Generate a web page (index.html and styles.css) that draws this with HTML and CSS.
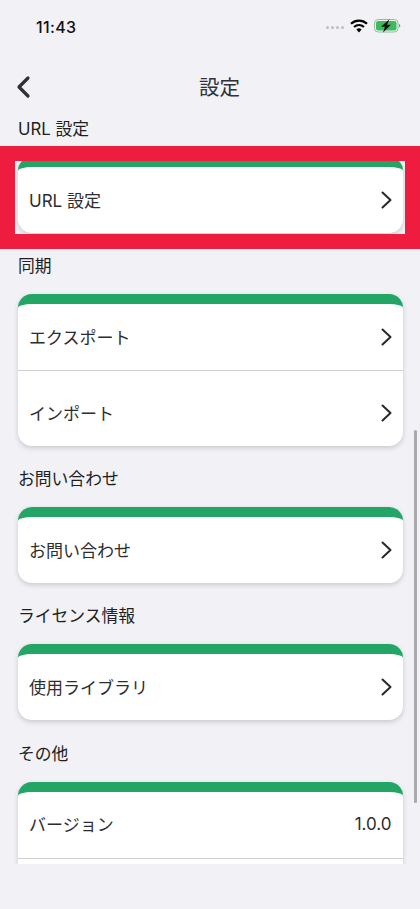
FILE: index.html
```html
<!DOCTYPE html>
<html lang="ja">
<head>
<meta charset="utf-8">
<title>設定</title>
<link rel="stylesheet" href="styles.css">
</head>
<body>
<div class="screen">
  <header class="status">
    <span class="time">11:43</span>
    <div class="status-icons">
      <span class="dots"><i></i><i></i><i></i><i></i></span>
      <svg class="wifi" viewBox="0 0 18 14" width="18" height="14"><path d="M1 4.800C5.600.6 12.400.6 17 4.800" fill="none" stroke="#000" stroke-width="2.200"/><path d="M4 8C7 5.400 11 5.400 14 8" fill="none" stroke="#000" stroke-width="2.200"/><path d="M6.400 10.400 9 13.400l2.600-3C10 9 8 9 6.400 10.400z" fill="#000"/></svg>
      <svg class="battery" viewBox="0 0 27 14" width="27" height="14"><rect x=".5" y=".5" width="23.500" height="12.500" rx="3.600" fill="none" stroke="#8fbf9b"/><rect x="2" y="2" width="20.500" height="9.500" rx="2.200" fill="#3dbb5c"/><path d="M25 5v3.600c.9-.3 1.300-1 1.300-1.800S25.900 5.300 25 5z" fill="#8a8a8a"/><path d="M15.500 .3 7 7.800h3.900L9 13.600l8-7.800h-4z" fill="#111"/></svg>
    </div>
  </header>
  <nav class="nav">
    <svg class="back" viewBox="0 0 16 24" width="16" height="24"><path d="M13 3 4 12l9 9" fill="none" stroke="#2f3136" stroke-width="3.200" stroke-linecap="round" stroke-linejoin="round"/></svg>
    <h1 class="title">設定</h1>
  </nav>
  <main class="content">
    <section class="group">
      <h2 class="label">URL 設定</h2>
      <div class="card">
        <div class="row"><span class="row-text">URL 設定</span><svg class="chev" viewBox="0 0 12 18" width="12" height="18"><path d="M2.500 1.500 10.500 9l-8 7.500" fill="none" stroke="#26282c" stroke-width="2" stroke-linecap="round" stroke-linejoin="round"/></svg></div>
      </div>
    </section>
    <section class="group">
      <h2 class="label">同期</h2>
      <div class="card">
        <div class="row"><span class="row-text">エクスポート</span><svg class="chev" viewBox="0 0 12 18" width="12" height="18"><path d="M2.500 1.500 10.500 9l-8 7.500" fill="none" stroke="#26282c" stroke-width="2" stroke-linecap="round" stroke-linejoin="round"/></svg></div>
        <div class="row"><span class="row-text">インポート</span><svg class="chev" viewBox="0 0 12 18" width="12" height="18"><path d="M2.500 1.500 10.500 9l-8 7.500" fill="none" stroke="#26282c" stroke-width="2" stroke-linecap="round" stroke-linejoin="round"/></svg></div>
      </div>
    </section>
    <section class="group">
      <h2 class="label">お問い合わせ</h2>
      <div class="card">
        <div class="row"><span class="row-text">お問い合わせ</span><svg class="chev" viewBox="0 0 12 18" width="12" height="18"><path d="M2.500 1.500 10.500 9l-8 7.500" fill="none" stroke="#26282c" stroke-width="2" stroke-linecap="round" stroke-linejoin="round"/></svg></div>
      </div>
    </section>
    <section class="group">
      <h2 class="label">ライセンス情報</h2>
      <div class="card">
        <div class="row"><span class="row-text">使用ライブラリ</span><svg class="chev" viewBox="0 0 12 18" width="12" height="18"><path d="M2.500 1.500 10.500 9l-8 7.500" fill="none" stroke="#26282c" stroke-width="2" stroke-linecap="round" stroke-linejoin="round"/></svg></div>
      </div>
    </section>
    <section class="group">
      <h2 class="label">その他</h2>
      <div class="card">
        <div class="row"><span class="row-text">バージョン</span><span class="row-text">1.0.0</span></div>
        <div class="row"></div>
      </div>
    </section>
  </main>
  <div class="scrollbar"></div>
  <div class="highlight"></div>
</div>
</body>
</html>
```
FILE: styles.css
```css
* { box-sizing: border-box; }
html, body { margin: 0; padding: 0; }
body {
  width: 420px;
  height: 909px;
  overflow: hidden;
  background: #f1f1f6;
  font-family: "Inter", "Noto Sans CJK JP", "Noto Sans", sans-serif;
  color: #26282c;
}
.screen {
  position: relative;
  width: 420px;
  height: 909px;
  display: flex;
  flex-direction: column;
}
.status {
  height: 54px;
  flex: none;
  display: flex;
  justify-content: space-between;
  align-items: center;
  padding: 0 19.500px 0 36px;
}
.time { font-size: 16px; font-weight: 500; color: #111; letter-spacing: .35px; }
.status-icons { display: flex; align-items: center; gap: 6px; position: relative; top: -1px; }
.dots { display: flex; gap: 2px; margin-top: 3px; }
.dots i { width: 3px; height: 3px; border-radius: 50%; background: #bdbdc2; }
.nav {
  position: relative;
  height: 63px;
  flex: none;
  display: flex;
  align-items: center;
  justify-content: center;
  padding-left: 19px;
}
.back { position: absolute; left: 15px; top: 21px; }
.title { margin: 0; font-size: 20.500px; font-weight: 400; color: #2f3136; position: relative; top: .5px; }
.content {
  height: 746.500px;
  flex: none;
  overflow: hidden;
  padding: 0 17.500px 0 18px;
}
.group { margin-bottom: 21.150px; }
.label {
  margin: 0 0 16px;
  height: 24px;
  line-height: 24px;
  font-size: 16.800px;
  font-weight: 400;
  color: #1d1f22;
}
.card {
  background: #fff;
  border-top: 10px solid #23a566;
  border-radius: 14px;
  box-shadow: 0 2px 5px rgba(60, 60, 70, .22);
}
.row {
  height: 66px;
  display: flex;
  align-items: center;
  justify-content: space-between;
  padding: 0 11px;
  font-size: 17px;
  color: #2b2d31;
}
.row-text { margin-top: -2px; }
.row + .row { border-top: 1.500px solid #cfcfd2; height: 76px; padding-top: 9px; }
.scrollbar {
  position: absolute;
  left: 414px;
  top: 430px;
  width: 3px;
  height: 373px;
  border-radius: 2px;
  background: #a9a9ad;
}
.highlight {
  position: absolute;
  left: 0;
  top: 146px;
  width: 420px;
  height: 103px;
  border-style: solid;
  border-color: #ee1c3f;
  border-width: 15px;
}
```
